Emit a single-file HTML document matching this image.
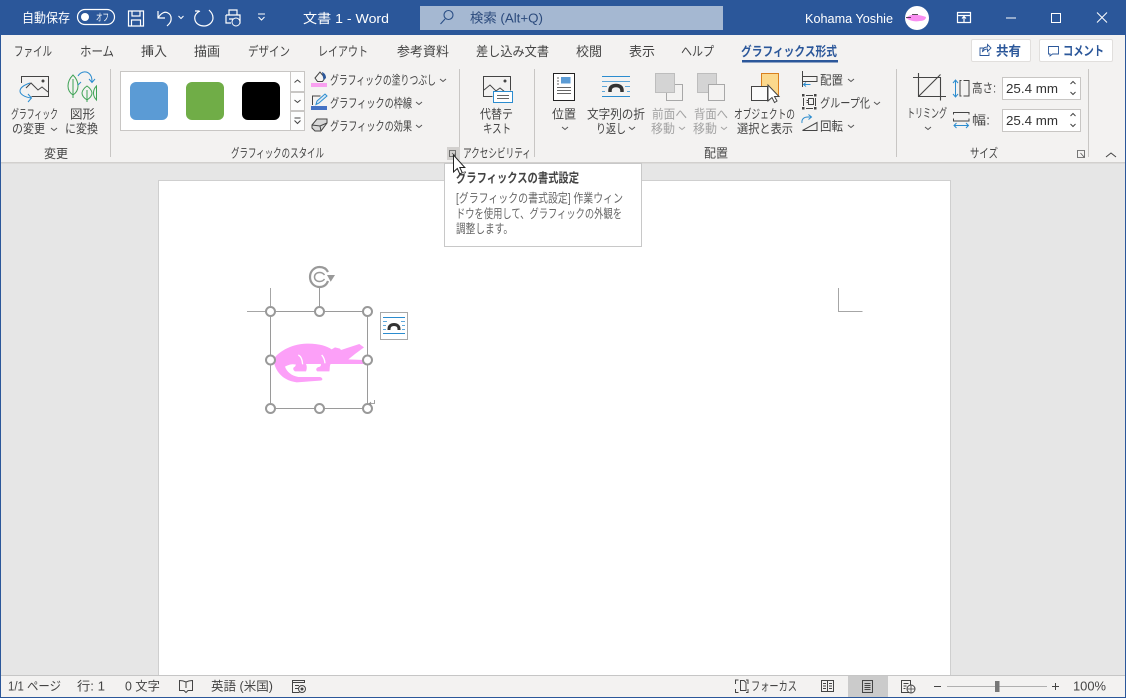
<!DOCTYPE html>
<html lang="ja"><head><meta charset="utf-8"><title>文書 1 - Word</title>
<style>
html,body{margin:0;padding:0;background:#e6e6e6}
svg{display:block;position:absolute;left:0;top:0}
text{font-family:"Liberation Sans","Noto Sans CJK JP",sans-serif;font-size:12.5px;fill:#444}
.w{fill:#fff}
.g{fill:#a3a3a3}
.s{font-size:12.5px}
.tb{font-size:13px}
.k{fill:none;stroke:#444;stroke-width:1}
.b{fill:none;stroke:#2b8ccf;stroke-width:1}
.wk{fill:none;stroke:#fff;stroke-width:1.2}
</style></head>
<body>
<svg width="1126" height="698" viewBox="0 0 1126 698" xmlns="http://www.w3.org/2000/svg">
<defs><path id="c" d="M0 0l3 2.500L6 0" fill="none" stroke="#555" stroke-width="1"/></defs>
<rect width="1126" height="698" fill="#e6e6e6"/>
<!-- title bar -->
<rect width="1126" height="35" fill="#2b579a"/>
<text class="w" x="22" y="22.500" style="font-size:13px" textLength="48" lengthAdjust="spacingAndGlyphs">自動保存</text>
<rect x="77.500" y="9.500" width="37" height="15" rx="7.500" class="wk"/>
<circle cx="85" cy="17" r="4" fill="#fff"/>
<text class="w" x="96" y="21" style="font-size:10px" textLength="13" lengthAdjust="spacingAndGlyphs">オフ</text>
<path class="wk" d="M128.500 11h15v15h-15zM132 11v5h8v-5M131.500 26v-6h9v6"/>
<path class="wk" d="M158 11v7h7M158 18c3-5 7-7 10-5 4 2 4 8 1 11l-2 2"/>
<path d="M178.500 16l2.500 2.500 2.500-2.500" fill="none" stroke="#fff"/>
<path class="wk" d="M200 11c-4 2-6 5-5 9 1 4 5 6 9 6 5 0 9-4 9-8 0-4-2-6-4-8M199 11h-4"/>
<path class="wk" d="M229 15v-5h8v5M226 15h14v8h-5M226 15v8h5M229 19h4v5"/>
<circle cx="236" cy="22" r="4" fill="#2b579a" stroke="#fff"/>
<path d="M258 14h7M258.500 17l3 3 3-3" fill="none" stroke="#fff"/>
<text class="w" x="303" y="23" style="font-size:13px" textLength="86" lengthAdjust="spacingAndGlyphs">文書 1  -  Word</text>
<rect x="420" y="6" width="303" height="24" fill="#a5b8d2"/>
<circle cx="448.500" cy="15" r="4.500" fill="none" stroke="#2b4f86" stroke-width="1.100"/>
<path d="M445 19l-4.500 5" stroke="#2b4f86" stroke-width="1.100"/>
<text x="470" y="22.500" style="fill:#2b4a7c;font-size:13px" textLength="73" lengthAdjust="spacingAndGlyphs">検索 (Alt+Q)</text>
<text class="w" x="805" y="23" style="font-size:12.500px" textLength="88" lengthAdjust="spacingAndGlyphs">Kohama Yoshie</text>
<circle cx="917" cy="18" r="12" fill="#fff"/>
<path d="M906 18c3-3 7-4 11-3 3 0 6 1 9 2 0 2-2 4-6 4-5 1-10 0-14-3z" fill="#f88ff0"/>
<path d="M906 17.500h5M912 14.500h6" stroke="#222" stroke-width=".8"/>
<path class="wk" d="M957.500 12.500h13v10h-13zM957.500 15.500h13M964 22v-5M962 18.500l2-2 2 2" stroke-width="1"/>
<path d="M1006 18h10" stroke="#fff" stroke-width="1"/>
<rect x="1051.500" y="13.500" width="9" height="9" fill="none" stroke="#fff"/>
<path d="M1097 12.500l10 10M1107 12.500l-10 10" stroke="#fff"/>
<!-- ribbon -->
<rect x="1" y="35" width="1124" height="128" fill="#f3f2f1"/>
<rect x="0" y="162" width="1126" height="1.500" fill="#d2d0ce"/>
<g>
<text class="tb" x="14" y="56" textLength="38" lengthAdjust="spacingAndGlyphs">ファイル</text>
<text class="tb" x="80" y="56" textLength="34" lengthAdjust="spacingAndGlyphs">ホーム</text>
<text class="tb" x="141" y="56" textLength="26" lengthAdjust="spacingAndGlyphs">挿入</text>
<text class="tb" x="194" y="56" textLength="26" lengthAdjust="spacingAndGlyphs">描画</text>
<text class="tb" x="248" y="56" textLength="42" lengthAdjust="spacingAndGlyphs">デザイン</text>
<text class="tb" x="318" y="56" textLength="50" lengthAdjust="spacingAndGlyphs">レイアウト</text>
<text class="tb" x="397" y="56" textLength="52" lengthAdjust="spacingAndGlyphs">参考資料</text>
<text class="tb" x="476" y="56" textLength="73" lengthAdjust="spacingAndGlyphs">差し込み文書</text>
<text class="tb" x="576" y="56" textLength="26" lengthAdjust="spacingAndGlyphs">校閲</text>
<text class="tb" x="629" y="56" textLength="26" lengthAdjust="spacingAndGlyphs">表示</text>
<text class="tb" x="681" y="56" textLength="33" lengthAdjust="spacingAndGlyphs">ヘルプ</text>
<text class="tb" x="741" y="56" style="fill:#2b579a;font-weight:700" textLength="96" lengthAdjust="spacingAndGlyphs">グラフィックス形式</text>
</g>
<rect x="742" y="60" width="96" height="2.500" fill="#2b579a"/>
<rect x="971.500" y="39.500" width="59" height="22" rx="1.500" fill="#fff" stroke="#e1dfdd"/>
<rect x="1039.500" y="39.500" width="73" height="22" rx="1.500" fill="#fff" stroke="#e1dfdd"/>
<path d="M983.500 48h-3.500v7.500h9v-3M982.500 52c0-3.500 2-5 5-5v-2.500l3.500 3.500-3.500 3.500V49c-2 0-4 1-5 3z" fill="none" stroke="#2b579a" stroke-width=".9"/>
<text x="996" y="55.500" style="fill:#2b579a;font-weight:700;font-size:13px" textLength="25" lengthAdjust="spacingAndGlyphs">共有</text>
<path d="M1048.500 46.500h10v7.500h-6l-2.500 2v-2h-1.500z" fill="none" stroke="#2b579a" stroke-width=".9"/>
<text x="1063" y="55.500" style="fill:#2b579a;font-weight:700;font-size:13px" textLength="41" lengthAdjust="spacingAndGlyphs">コメント</text>
<!-- separators -->
<path d="M110.500 69v88M459.500 69v88M534.500 69v88M896.500 69v88M1088.500 69v88" stroke="#c8c6c4" stroke-width="1"/>
<!-- change group -->
<path class="k" d="M21.500 83v-6.500h27v20h-17"/>
<path class="k" d="M26 88l5-5 7 7 4-3 6 5"/>
<circle cx="43" cy="81" r="1.500" fill="#444"/>
<path class="b" d="M30 83c-6 2-10 5-10 8 0 3 4 6 11 7M28 94l3.500 4-3.500 4"/>
<path d="M73 75c3 3 5 7 5 11 0 4-2 7-5 9-3-2-5-5-5-9 0-4 2-8 5-11zM73 79v19M87 86c3 2 5 5 5 7 0 3-2 5-5 7-3-2-5-4-5-7 0-2 2-5 5-7zM87 90v12M96.500 86c-2 2-3 4-3 7s1 5 3 7z" fill="none" stroke="#3ea255" stroke-width="1"/>
<path class="b" d="M78 76c3-5 10-6 13 0 1 2 1 4 1 6M89 79l3 3.500 3-3.500M78 85l3-3"/>
<text x="11" y="118.500" class="s" textLength="47" lengthAdjust="spacingAndGlyphs">グラフィック</text>
<text x="12" y="133" class="s" textLength="33" lengthAdjust="spacingAndGlyphs">の変更</text>
<use href="#c" x="51" y="128"/>
<text x="70" y="118.500" class="s" textLength="25" lengthAdjust="spacingAndGlyphs">図形</text>
<text x="65" y="133" class="s" textLength="33" lengthAdjust="spacingAndGlyphs">に変換</text>
<text x="44" y="158" class="s" textLength="24" lengthAdjust="spacingAndGlyphs">変更</text>
<!-- gallery -->
<rect x="120.500" y="71.500" width="170" height="59" fill="#fff" stroke="#c8c6c4"/>
<rect x="130" y="82" width="38" height="38" rx="6" fill="#5b9bd5"/>
<rect x="186" y="82" width="38" height="38" rx="6" fill="#70ad47"/>
<rect x="242" y="82" width="38" height="38" rx="6" fill="#000"/>
<path d="M290.500 71.500h14v20h-14zM290.500 92.500h14v18h-14zM290.500 111.500h14v19h-14z" fill="#fdfdfd" stroke="#c8c6c4"/>
<path d="M294.500 82.500l3-2.500 3 2.500M294.500 100l3 2.500 3-2.500M294.500 118h6M294.500 120.500l3 3 3-3" fill="none" stroke="#444"/>
<!-- fill/outline/effect -->
<rect x="311" y="83" width="16" height="4" fill="#f9a0f0"/>
<path class="k" d="M315 78l5-6 5 6-2.500 3.500h-5z"/>
<path d="M322 72c2.500 1 4 3 4 6l-2.500 2z" fill="#2b579a"/>
<rect x="311" y="106" width="16" height="4" fill="#4472c4"/>
<path class="k" d="M312.500 105v-9h8"/>
<path d="M316 104.500l1-3.500 8-7 2 2-8 7z" fill="#d8e8f5" stroke="#2b8ccf"/>
<path d="M312 125l5-6h10l0 4-6 8h-6l-3-3z" fill="#d8d8d8" stroke="#444"/>
<path class="k" d="M312 125l8 1 7-3M320 126l1 5"/>
<text x="330" y="84.500" class="s" textLength="106" lengthAdjust="spacingAndGlyphs">グラフィックの塗りつぶし</text>
<text x="330" y="107.500" class="s" textLength="82" lengthAdjust="spacingAndGlyphs">グラフィックの枠線</text>
<text x="330" y="130.500" class="s" textLength="82" lengthAdjust="spacingAndGlyphs">グラフィックの効果</text>
<use href="#c" x="440" y="79"/><use href="#c" x="416" y="102"/><use href="#c" x="416" y="125"/>
<text x="231" y="157.500" class="s" textLength="93" lengthAdjust="spacingAndGlyphs">グラフィックのスタイル</text>
<rect x="447" y="147" width="13" height="13" fill="#d2d0ce"/>
<path d="M449.500 150.500h6v6h-6zM452 153l3 3M452.500 156h2.500v-2.500" fill="none" stroke="#555" stroke-width=".8"/>
<!-- alt text -->
<path d="M492.500 96.500h-9v-20h27v14M484 90l6-5 6 6 4-3 5 4" class="k"/>
<circle cx="505" cy="81" r="1.500" fill="#444"/>
<rect x="493.500" y="91.500" width="19" height="11" fill="#fff" stroke="#2b8ccf"/>
<path d="M497 95.500h12M497 98.500h12" stroke="#666" stroke-width="1"/>
<text x="480" y="118.500" class="s" textLength="33" lengthAdjust="spacingAndGlyphs">代替テ</text>
<text x="483" y="133" class="s" textLength="28" lengthAdjust="spacingAndGlyphs">キスト</text>
<text x="463" y="157.500" class="s" textLength="68" lengthAdjust="spacingAndGlyphs">アクセシビリティ</text>
<!-- position -->
<rect x="553.500" y="73.500" width="21" height="27" fill="#fff" stroke="#222"/>
<rect x="561" y="77" width="9.500" height="6.500" fill="#5b9bd5"/>
<path d="M557 78h2M557 81h2M557 84h2M557 87.500h14M557 90.500h14M557 93.500h14" stroke="#666" stroke-width="1"/>
<text x="552" y="118.500" class="s" textLength="24" lengthAdjust="spacingAndGlyphs">位置</text>
<use href="#c" x="562" y="127"/>
<path d="M602 76.500h28M602 96.500h28" stroke="#2b8ccf"/>
<path d="M602 81.500h28M602 86.500h5M625 86.500h5M602 91.500h3M627 91.500h3" stroke="#2b8ccf" stroke-width=".8"/>
<path d="M610 92v-1.500c0-3.500 2.500-5 6-5s6 1.500 6 5V92" fill="none" stroke="#333" stroke-width="3.500"/>
<text x="587" y="118.500" class="s" textLength="58" lengthAdjust="spacingAndGlyphs">文字列の折</text>
<text x="596" y="133" class="s" textLength="30" lengthAdjust="spacingAndGlyphs">り返し</text>
<use href="#c" x="629" y="127"/>
<!-- forward/back -->
<rect x="666.500" y="84.500" width="16" height="16" fill="#f3f2f1" stroke="#a8a8a8"/>
<rect x="655.500" y="73.500" width="19" height="19" fill="#d4d4d4" stroke="#bdbdbd"/>
<rect x="697.500" y="73.500" width="19" height="19" fill="#d4d4d4" stroke="#bdbdbd"/>
<rect x="708.500" y="84.500" width="16" height="16" fill="#f3f2f1" stroke="#a8a8a8"/>
<text x="652" y="118.500" class="s g" textLength="35" lengthAdjust="spacingAndGlyphs">前面へ</text>
<text x="651" y="133" class="s g" textLength="24" lengthAdjust="spacingAndGlyphs">移動</text>
<use href="#c" x="679" y="127" opacity=".5"/>
<text x="694" y="118.500" class="s g" textLength="34" lengthAdjust="spacingAndGlyphs">背面へ</text>
<text x="693" y="133" class="s g" textLength="24" lengthAdjust="spacingAndGlyphs">移動</text>
<use href="#c" x="721" y="127" opacity=".5"/>
<!-- selection pane -->
<rect x="761.500" y="73.500" width="17" height="22" fill="#fbd88c" stroke="#d97f1e"/>
<rect x="751.500" y="86.500" width="16" height="14" fill="#fafafa" stroke="#444"/>
<path d="M768 85v16l4-3.500 2.500 5 2.500-1.500-2.500-4.500h4.500z" fill="#fff" stroke="#444"/>
<text x="734" y="118.500" class="s" textLength="61" lengthAdjust="spacingAndGlyphs">オブジェクトの</text>
<text x="737" y="133" class="s" textLength="56" lengthAdjust="spacingAndGlyphs">選択と表示</text>
<!-- align/group/rotate -->
<path class="k" d="M802.500 71v16M803 76.500h14v5h-14"/>
<path d="M803.500 84.500h7M806 82.500l-2.500 2 2.500 2" fill="none" stroke="#2b8ccf"/>
<rect x="802" y="94" width="2.500" height="2.500" fill="#444"/><rect x="814" y="94" width="2.500" height="2.500" fill="#444"/>
<rect x="802" y="107" width="2.500" height="2.500" fill="#444"/><rect x="814" y="107" width="2.500" height="2.500" fill="#444"/>
<path class="k" d="M806 95.500h7M806 108.500h7M803.500 98v8M815.500 98v8"/>
<path class="k" d="M808.500 98.500h5v6h-5zM806.500 100.500h2M806.500 102.500h2"/>
<path class="k" d="M802.500 130.500h14.500v-8l-14.500 8"/>
<path class="b" d="M802 123c-.5-3 1-6 6-6h3M808.500 114.500l3 2.500-3 2.500"/>
<text x="820" y="84.500" class="s" textLength="23" lengthAdjust="spacingAndGlyphs">配置</text>
<text x="820" y="107.500" class="s" textLength="50" lengthAdjust="spacingAndGlyphs">グループ化</text>
<text x="820" y="130.500" class="s" textLength="23" lengthAdjust="spacingAndGlyphs">回転</text>
<use href="#c" x="848" y="79"/><use href="#c" x="874" y="102"/><use href="#c" x="848" y="125"/>
<text x="704" y="157.500" class="s" textLength="24" lengthAdjust="spacingAndGlyphs">配置</text>
<!-- size -->
<path d="M913 77.500h27.500v23M918.500 73v23.500h27.500M918.500 96.500l22-22" fill="none" stroke="#444" stroke-width="1.100"/>
<text x="907" y="117.500" class="s" textLength="40" lengthAdjust="spacingAndGlyphs">トリミング</text>
<use href="#c" x="925" y="127"/>
<path d="M955.500 81v15M953 83l2.500-3 2.500 3M953 94l2.500 3 2.500-3" fill="none" stroke="#2b8ccf"/>
<path class="k" d="M961.500 80.500h-1.500v15.500h1.500M963.500 80.500h5.500v15.500h-5.500"/>
<path class="k" d="M953.500 114.500v-2h15.500v2M953.500 118.500v2.500h15.500v-2.500"/>
<path d="M954 125.500h14.500M956.500 123l-2.500 2.500 2.500 2.500M966 123l2.500 2.500-2.500 2.500" fill="none" stroke="#2b8ccf"/>
<text x="972" y="92.500" class="s" textLength="24" lengthAdjust="spacingAndGlyphs">高さ:</text>
<text x="972" y="124.500" class="s" textLength="18" lengthAdjust="spacingAndGlyphs">幅:</text>
<rect x="1002.500" y="77.500" width="78" height="22" fill="#fff" stroke="#c8c6c4"/>
<rect x="1002.500" y="109.500" width="78" height="22" fill="#fff" stroke="#c8c6c4"/>
<text x="1006" y="93" style="fill:#333;font-size:13px" textLength="52" lengthAdjust="spacingAndGlyphs">25.4 mm</text>
<text x="1006" y="125" style="fill:#333;font-size:13px" textLength="52" lengthAdjust="spacingAndGlyphs">25.4 mm</text>
<path d="M1070.500 84l2.500-2.500 2.500 2.500M1070.500 92l2.500 2.500 2.500-2.500M1070.500 116l2.500-2.500 2.500 2.500M1070.500 124l2.500 2.500 2.500-2.500" fill="none" stroke="#444"/>
<text x="970" y="157.500" class="s" textLength="28" lengthAdjust="spacingAndGlyphs">サイズ</text>
<path d="M1077.500 150.500h7v7h-7zM1080.500 153l4 4.500M1081 157.500h3.500V154" fill="none" stroke="#555" stroke-width=".8"/>
<path d="M1106 157l5-4 5 4" fill="none" stroke="#444"/>
<!-- page -->
<rect x="158.500" y="180.500" width="792" height="495" fill="#fff" stroke="#cfcfcf"/>
<path d="M270.500 288v23M247 311.500h23M838.500 288v23.500h24" fill="none" stroke="#a6a6a6"/>
<!-- selection -->
<rect x="270.500" y="311.500" width="97" height="97" fill="none" stroke="#9a9a9a"/>
<path d="M319.500 288v23" stroke="#9a9a9a"/>
<!-- crocodile -->
<g transform="translate(240 260) scale(.3333)" fill="#fca0f8">
<path d="M100 298C120 270 160 252 200 251C235 250 260 258 275 268L285 262L300 266L303 270L358 252L372 262L345 282L325 298L372 300V312H272C268 318 270 328 268 334H232C226 330 228 322 240 320C244 315 244 312 240 312H198C202 320 200 330 198 334H165C158 330 158 322 165 320L168 314C160 312 150 312 135 320C140 335 155 348 175 351L240 351C250 354 249 362 240 362L170 367C130 362 105 335 100 298Z"/>
<path d="M175 285c8 4 12 14 13 28M245 285c6 6 9 14 10 25" fill="none" stroke="#fff" stroke-width="4"/>
</g>
<!-- handles -->
<g fill="#fff" stroke="#999" stroke-width="2">
<circle cx="270.500" cy="311.500" r="4.500"/><circle cx="319.500" cy="311.500" r="4.500"/><circle cx="367.500" cy="311.500" r="4.500"/>
<circle cx="270.500" cy="360" r="4.500"/><circle cx="367.500" cy="360" r="4.500"/>
<circle cx="270.500" cy="408.500" r="4.500"/><circle cx="319.500" cy="408.500" r="4.500"/><circle cx="367.500" cy="408.500" r="4.500"/>
</g>
<path d="M374.500 400v3.500h-5M371 402l-1.500 1.500 1.500 1.500" fill="none" stroke="#888" stroke-width=".8"/>
<path d="M328 281c-1.500 4-4.500 6-8.500 6-5.500 0-9.500-4.500-9.500-10s4-10 9.500-10c4 0 7 2 8.500 5" fill="none" stroke="#999" stroke-width="2.200"/>
<path d="M324.500 279c-1 1.500-3 2.500-5 2.500-3 0-5-2-5-4.500s2-4.500 5-4.500c2 0 4 1 5 2.500" fill="none" stroke="#999" stroke-width="1.500"/>
<path d="M327 275h8l-4.300 6.700z" fill="#999"/>
<!-- layout options -->
<rect x="380.500" y="312.500" width="27" height="27" fill="#fff" stroke="#a8a8a8"/>
<path d="M383 317.500h22M383 333.500h22" stroke="#2b8ccf"/>
<path d="M383 321.500h4M401 321.500h4M383 325.500h3M402 325.500h3M383 329.500h3M402 329.500h3" stroke="#2b8ccf" stroke-width=".8"/>
<path d="M389 330v-1c0-3 2-4.500 5-4.500s5 1.500 5 4.500v1" fill="none" stroke="#333" stroke-width="3"/>
<!-- tooltip -->
<rect x="444.500" y="163.500" width="197" height="83" fill="#fff" stroke="#c8c8c8"/>
<text x="456" y="182.500" style="fill:#444;font-weight:700;font-size:13px" textLength="123" lengthAdjust="spacingAndGlyphs">グラフィックスの書式設定</text>
<text x="456" y="202.500" class="s" style="fill:#666" textLength="167" lengthAdjust="spacingAndGlyphs">[グラフィックの書式設定] 作業ウィン</text>
<text x="456" y="218" class="s" style="fill:#666" textLength="166" lengthAdjust="spacingAndGlyphs">ドウを使用して、グラフィックの外観を</text>
<text x="456" y="233" class="s" style="fill:#666" textLength="57" lengthAdjust="spacingAndGlyphs">調整します。</text>
<!-- cursor -->
<path d="M453.500 155v17l3.800-3.500 2.500 5.500 2.500-1.200-2.500-5.300h5z" fill="#fff" stroke="#222" stroke-width="1"/>
<!-- status bar -->
<rect x="1" y="675" width="1124" height="22" fill="#f3f2f1"/>
<rect y="675" width="1126" height="1" fill="#c6c6c6"/>
<rect x="0" y="697" width="1126" height="1" fill="#2b579a"/>
<rect x="0" y="35" width="1" height="663" fill="#2b579a"/>
<rect x="1125" y="35" width="1" height="663" fill="#2b579a"/>
<text x="8" y="690.500" class="s" textLength="53" lengthAdjust="spacingAndGlyphs">1/1 ページ</text>
<text x="77" y="690.500" class="s" textLength="28" lengthAdjust="spacingAndGlyphs">行: 1</text>
<text x="125" y="690.500" class="s" textLength="35" lengthAdjust="spacingAndGlyphs">0 文字</text>
<text x="211" y="690.500" class="s" textLength="62" lengthAdjust="spacingAndGlyphs">英語 (米国)</text>
<text x="751" y="690.500" class="s" textLength="46" lengthAdjust="spacingAndGlyphs">フォーカス</text>
<text x="1073" y="690.500" style="font-size:12.500px" textLength="33" lengthAdjust="spacingAndGlyphs">100%</text>
<path class="k" d="M186 682c-2-1-4-1.500-6.500-1.500v10H184l2 2 2-2h4.500v-10c-2.500 0-4.500.5-6.500 1.500zM186 682v6"/>
<path class="k" d="M292.500 680.500h12v2h-12zM292.500 682.500v10h7M295 685.500h4M295 688.500h3"/>
<circle cx="302" cy="689" r="3.500" class="k"/><circle cx="302" cy="689" r="1.500" fill="#444"/>
<path class="k" d="M735.500 684v-4h3M748 684v-4h-2M735.500 689v3.500h3M748 689v3.500h-2M740.500 690.500v-10h3.500l2 2v8z"/>
<path class="k" d="M821.500 680.500h12v11h-12zM827.500 680.500v11M823 683.500h3M823 686h3M823 688.500h3M829 683.500h3M829 686h3M829 688.500h3"/>
<rect x="848" y="676" width="40" height="21" fill="#cbcbcb"/>
<path class="k" d="M862.500 680.500h10v12h-10zM864.500 683.500h6M864.500 685.500h6M864.500 687.500h6M864.500 689.500h6"/>
<path class="k" d="M901.500 680.500h9v12h-9zM903.500 683.500h5M903.500 686h3M903.500 688.500h2"/>
<circle cx="911" cy="689" r="4" fill="#f3f2f1" stroke="#444"/>
<path d="M907 689h8M911 685v8" stroke="#444" stroke-width=".8"/>
<path d="M934 686.500h7M1052 686.500h7M1055.500 683v7" stroke="#444"/>
<path d="M947 686.500h100" stroke="#b0b0b0"/>
<rect x="995" y="681" width="4.500" height="11" fill="#777"/>
</svg>
</body></html>
